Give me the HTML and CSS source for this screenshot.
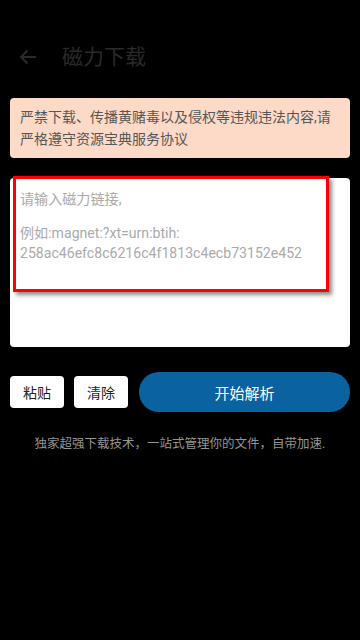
FILE: index.html
```html
<!DOCTYPE html>
<html lang="zh">
<head>
<meta charset="utf-8">
<link rel="stylesheet" href="styles.css">
</head>
<body>
<div class="page">
  <header class="bar">
    <svg class="back" width="18" height="16" viewBox="0 0 18 16"><path d="M17 8H2M8.5 1.5L2 8l6.5 6.5" fill="none" stroke="#2a2a2a" stroke-width="2"/></svg>
    <span class="title">磁力下载</span>
  </header>
  <div class="warn">严禁下载、传播黄赌毒以及侵权等违规违法内容,请严格遵守资源宝典服务协议</div>
  <div class="card">
    <div class="hint">
      <div>请输入磁力链接,</div>
      <div class="gap"></div>
      <div>例如:magnet:?xt=urn:btih:</div>
      <div>258ac46efc8c6216c4f1813c4ecb73152e452</div>
    </div>
  </div>
  <div class="actions">
    <button class="btn small">粘贴</button>
    <button class="btn small">清除</button>
    <button class="btn main">开始解析</button>
  </div>
  <p class="foot">独家超强下载技术，一站式管理你的文件，自带加速.</p>
</div>
</body>
</html>
```
FILE: styles.css
```css
html, body { margin: 0; padding: 0; background: #000; }
body { font-family: Roboto, "Noto Sans CJK SC", sans-serif; width: 360px; height: 640px; overflow: hidden; }
.page { padding: 0 10px; }
.bar { height: 98px; display: flex; align-items: center; padding: 16px 0 0 9px; box-sizing: border-box; }
.back { display: block; margin-right: 25px; }
.title { color: #2a2a2a; font-size: 21px; line-height: 24px; }
.warn { background: #fcdac7; border-radius: 4px; color: #565656; font-size: 14px; line-height: 22px; padding: 8px 10px; height: 44px; }
.card { margin-top: 20px; background: #fff; border-radius: 4px; height: 169px; position: relative; }
.hint { position: absolute; left: 3px; top: -2px; border: 3px solid #ff0000; box-shadow: 3px 3px 4px rgba(0,0,0,0.45); color: #aaaaaa; font-size: 14.1px; line-height: 20.5px; padding: 10px 0 0 4px; box-sizing: border-box; height: 116px; width: 316px; }
.hint div { white-space: nowrap; }
.hint .gap { height: 13px; }
.actions { display: flex; align-items: center; margin-top: 25px; gap: 10px; }
.btn { font-family: Roboto, "Noto Sans CJK SC", sans-serif; border: none; padding: 0; }
.small { width: 54px; height: 32px; background: #fff; border-radius: 4px; color: #222; font-size: 14px; }
.main { flex: 1; height: 40px; background: #0b62a1; border-radius: 20px; color: #fff; font-size: 15px; margin-left: 1px; }
.foot { margin: 24px 0 0; text-align: center; color: #959595; font-size: 12.5px; line-height: 16px; }
```
